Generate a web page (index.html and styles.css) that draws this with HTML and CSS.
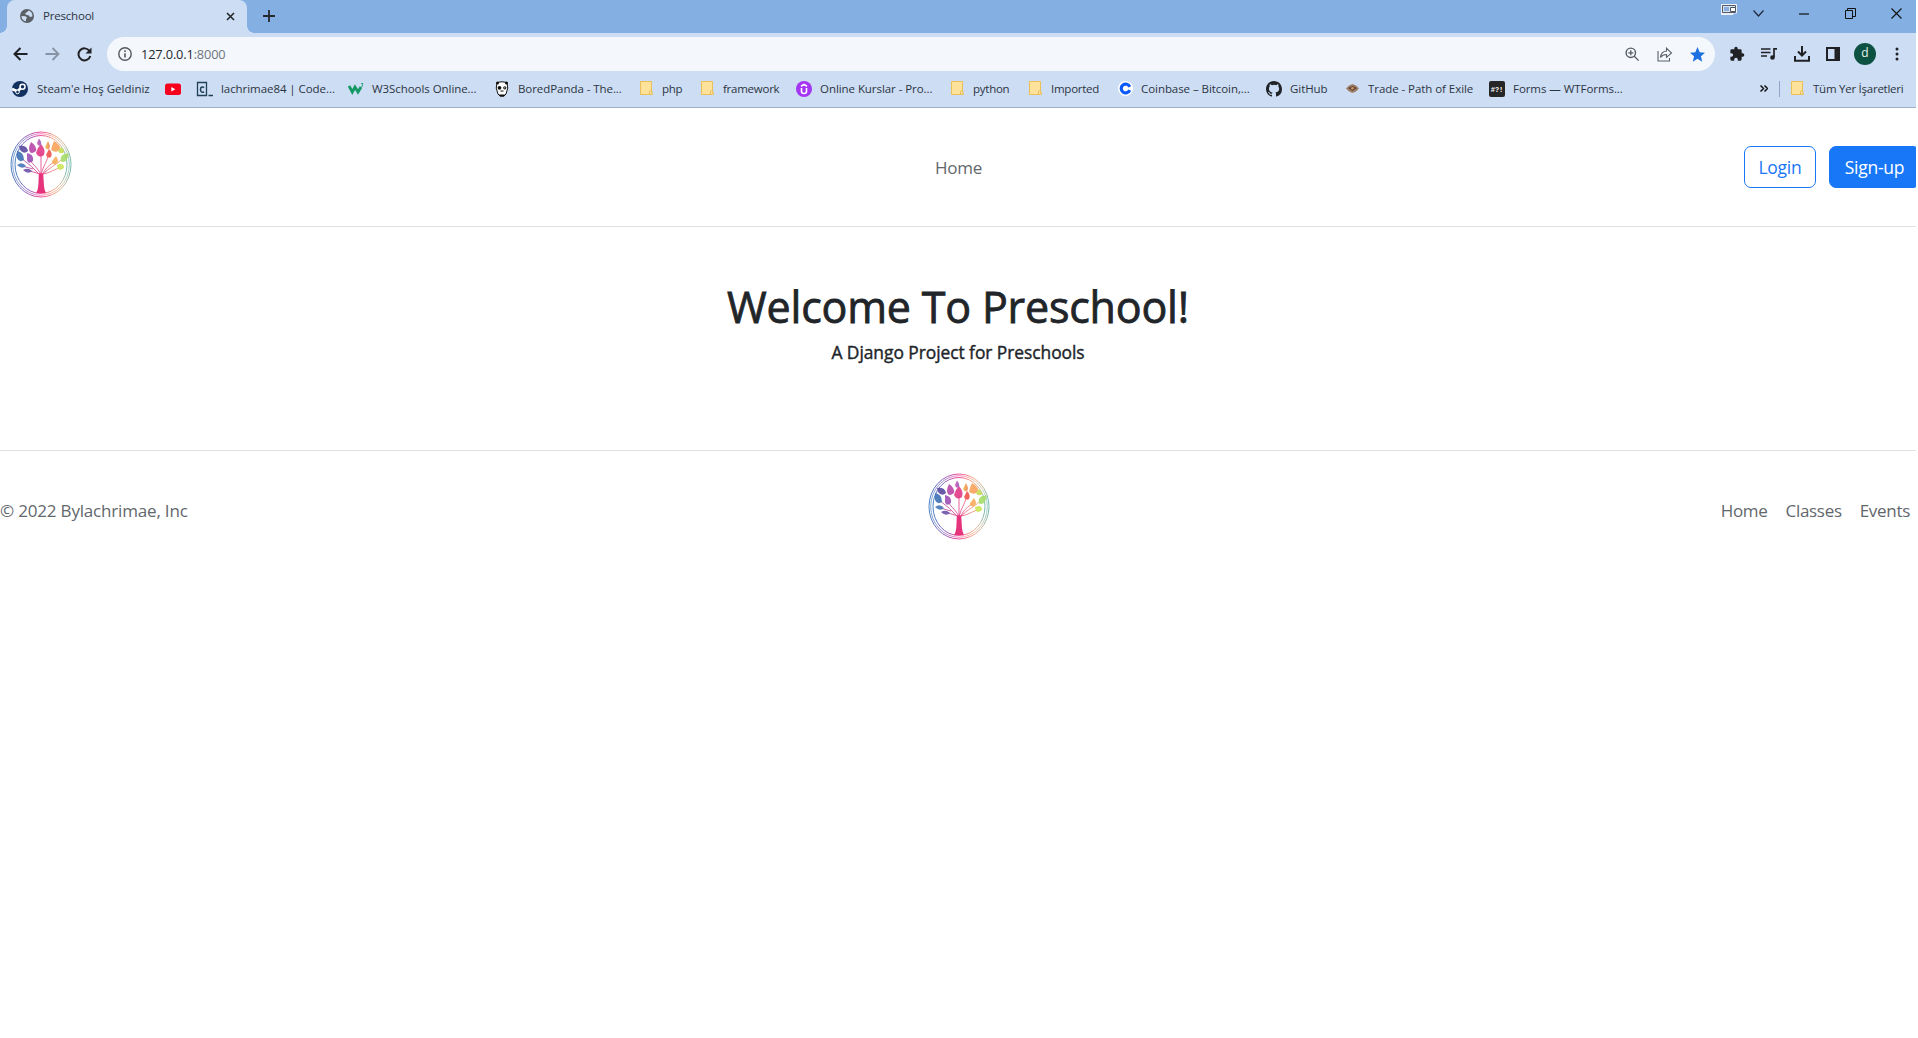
FILE: index.html
```html
<!DOCTYPE html>
<html lang="tr">
<head>
<meta charset="utf-8">
<title>Preschool</title>
<link rel="stylesheet" href="styles.css">
</head>
<body>
<svg class="defs" width="0" height="0">
  <defs>
    <linearGradient id="rainbow" x1="0" y1="0" x2="1" y2="0"><stop offset="0" stop-color="#4c83c3"/><stop offset=".22" stop-color="#8262bd"/><stop offset=".48" stop-color="#f04a9c"/><stop offset=".72" stop-color="#f6a283"/><stop offset=".88" stop-color="#ceb99c"/><stop offset="1" stop-color="#75b9ad"/></linearGradient>
    <linearGradient id="branch" gradientUnits="userSpaceOnUse" x1="8" y1="0" x2="54" y2="0"><stop offset="0" stop-color="#8851aa"/><stop offset=".5" stop-color="#e53482"/><stop offset="1" stop-color="#f2b45e"/></linearGradient>
    <linearGradient id="multi"><stop offset="0" stop-color="#d74fb0"/><stop offset=".5" stop-color="#6e63c6"/><stop offset=".6" stop-color="#efd24c"/><stop offset="1" stop-color="#ef7a51"/></linearGradient>
    <symbol id="tree" viewBox="0 0 62 67">
      <g fill="none" stroke="url(#rainbow)"><ellipse cx="31" cy="33.500" rx="30" ry="32.500" stroke-width="1"/><ellipse cx="31" cy="33.500" rx="28.300" ry="30.800" stroke-width=".7"/><ellipse cx="31" cy="33.500" rx="26" ry="29" stroke-width="1"/></g>
      <g fill="none" stroke="url(#branch)" stroke-width=".8"><path d="M31 44V22M31 44C28 37 24 35 20 29M30 44Q22 35 11 27M30 43L20 40M31 44C33 35 37 31 38 25M32 44C36 36 43 31 45 31M32 44C40 36 46 34 51 29M33 43C40 42 43 39 49 37M23 38L12 35"/></g>
      <path fill="#e5347b" d="M28.800 42.500H33.200L34 55Q34.500 60 36 62H26Q28.300 59 28.500 51Z"/>
      <g opacity=".9">
      <path fill="#3f72b5" d="M7 20Q14 21 14 29Q9 32 7 27Z"/><path fill="#4a78b9" d="M7 34Q12 30 16 35Q12 39 7 34Z"/><path fill="#594aa1" d="M9 15Q17 14 18 20Q14 24 10 19Z"/>
      <path fill="#6d51a8" d="M13 39Q18 36 22 40Q18 44 13 39Z"/><path fill="#9c50b5" d="M17 22Q24 23 23 30Q18 34 17 29Z"/><path fill="#b946a7" d="M21 11Q27 15 26 20Q20 25 19 18Q19 15 21 11Z"/>
      <path fill="#e23a87" d="M31 13Q36 19 34 24Q29 28 26 22Q27 17 31 13Z"/><path fill="url(#multi)" d="M29 7.500Q32 11 31 14Q28 16 27 12ZM38 10Q41 15 39 18Q36 19 35 16Z"/>
      <path fill="#f0524b" d="M39 18Q43 22 41 26Q38 28 36 24Z"/><path fill="#f9a359" d="M44 10Q51 14 50 18Q47 23 41 19Q42 14 44 10Z"/><path fill="#f8ad5c" d="M46 25Q50 31 46 33Q42 34 42 30Z"/>
      <path fill="#c6dc54" d="M51 16Q56 20 53 22Q49 23 48 20Z"/><path fill="#a7dc69" d="M59 22.500Q57 33 51 30.500Q49 22 59 22.500Z"/><path fill="#cde557" d="M47 34Q54 31 54 37Q48 42 47 34Z"/>
      </g>
    </symbol>
    <symbol id="folder" viewBox="0 0 13 15"><path d="M.5.5h11v10.500l.8 1v1.500H.5z" fill="#ffe29a" stroke="#e9bf5b"/><path d="M9.500 11q0-1.500 1.200-1.500t1.200 1.500v2.500H9.500z" fill="#ffe29a" stroke="#e9bf5b"/></symbol>
  </defs>
</svg>

<div class="browser">
  <div class="tabstrip">
    <div class="tab">
      <svg width="14" height="14" viewBox="0 0 14 14"><circle cx="7" cy="7" r="7" fill="#5a6066"/><path d="M8.500 1.500L7 3.300 5.300 4 5.500 5.500 9 6.500l1 1.500 2.300-.5Q13 3 8.500 1.500ZM1.500 7l4 .2 1.600 1.600L6 10v2.300Q1.500 11.500 1.500 7ZM8 12.300l2-2" fill="#cdddf4"/></svg>
      <span class="tab-title">Preschool</span>
      <svg class="tab-close" width="9" height="9" viewBox="0 0 9 9"><path d="M1 1l7 7M8 1L1 8" stroke="#25282c" stroke-width="1.600"/></svg>
    </div>
    <svg class="new-tab" width="12" height="12" viewBox="0 0 12 12"><path d="M6 0v12M0 6h12" stroke="#25282c" stroke-width="1.800"/></svg>
    <div class="window-controls">
      <svg width="16" height="12" viewBox="0 0 16 12"><path d="M.5.500h15v8.500H12v1.500H.5z" fill="#e8edf3" stroke="#eef2f7"/><path d="M1.500 1.500h13v7h-13z" fill="#d8e3f2" stroke="#535b68"/><path d="M3 3h5v4H3z" fill="#8caede"/><path d="M9.500 3.500h5v4h-5z" fill="#fff" stroke="#4e5561"/></svg>
      <svg width="11" height="7" viewBox="0 0 11 7"><path d="M.5.500l5 5.500 5-5.500" fill="none" stroke="#202938" stroke-width="1.200"/></svg>
      <svg width="10" height="2"><path d="M0 1h10" stroke="#111" stroke-width="1.200"/></svg>
      <svg width="11" height="11" viewBox="0 0 11 11"><path d="M.5 2.500h7v8h-7zM2.500 2V.5h8v8H8" fill="none" stroke="#111"/></svg>
      <svg width="11" height="11" viewBox="0 0 11 11"><path d="M.5.500l10 10M10.500.500l-10 10" stroke="#111" stroke-width="1.100"/></svg>
    </div>
  </div>

  <div class="toolbar">
    <div class="nav-buttons">
      <svg width="15" height="14" viewBox="0 0 15 14"><path d="M14.500 7H1.500M7.500 1L1.500 7l6 6" fill="none" stroke="#202124" stroke-width="2"/></svg>
      <svg width="15" height="14" viewBox="0 0 15 14"><path d="M.5 7h13M7.500 1l6 6-6 6" fill="none" stroke="#8793a5" stroke-width="1.800"/></svg>
      <svg width="15" height="15" viewBox="0 0 15 15"><path d="M12.500 4A6 6 0 1 0 13.300 9" fill="none" stroke="#202124" stroke-width="2"/><path d="M14.500.5v6h-6z" fill="#202124"/></svg>
    </div>
    <div class="omnibox">
      <svg width="14" height="14" viewBox="0 0 14 14"><circle cx="7" cy="7" r="6.200" fill="none" stroke="#55595e" stroke-width="1.400"/><path d="M7 6.200v4.300M7 3.300v1.700" stroke="#55595e" stroke-width="1.600"/></svg>
      <span class="url">127.0.0.1<span class="port">:8000</span></span>
      <div class="omnibox-actions">
        <svg width="15" height="15" viewBox="0 0 15 15"><circle cx="5.800" cy="5.800" r="4.700" fill="none" stroke="#555a60" stroke-width="1.400"/><path d="M9.300 9.300l4.300 4.300M3.300 5.800h5M5.800 3.300v5" stroke="#555a60" stroke-width="1.300"/></svg>
        <svg width="16" height="15" viewBox="0 0 16 15"><path d="M1 4v10h11.500v-3M3.500 10.500Q4 4.500 9.500 4V1.200L14.500 6 9.500 10.300V7.500Q5.500 7.500 3.500 10.500Z" fill="none" stroke="#5b6067" stroke-width="1.100"/></svg>
        <svg width="15" height="15" viewBox="0 0 24 24"><path fill="#1c70df" d="M12 0l3.500 8.500 8.500.7-6.500 5.600 2 8.700L12 18.800l-7.500 4.700 2-8.700L0 9.200l8.500-.7z"/></svg>
      </div>
    </div>
    <div class="tool-icons">
      <svg width="16" height="16" viewBox="0 0 24 24"><path fill="#202124" d="M20.500 11H19V7a2 2 0 0 0-2-2h-4V3.500a2.500 2.500 0 0 0-5 0V5H4a2 2 0 0 0-2 2v3.800h1.500a2.700 2.700 0 0 1 0 5.400H2V20a2 2 0 0 0 2 2h3.800v-1.500a2.700 2.700 0 0 1 5.400 0V22H17a2 2 0 0 0 2-2v-4h1.500a2.500 2.500 0 0 0 0-5z"/></svg>
      <svg width="17" height="14" viewBox="0 0 17 14"><path d="M0 2h9.500M0 5.500h9.500M0 9h6M13 10V1.800h3" fill="none" stroke="#202124" stroke-width="1.700"/><circle cx="11.500" cy="10.500" r="2.300" fill="#202124"/></svg>
      <svg width="16" height="16" viewBox="0 0 16 16"><path d="M8 0v9M4 5.500L8 9.500l4-4M1 10v4.700h14V10" fill="none" stroke="#202124" stroke-width="2"/></svg>
      <svg width="14" height="14" viewBox="0 0 14 14"><path d="M1 1h12v12H1z" fill="none" stroke="#202124" stroke-width="2"/><path d="M8.500 1H13v12H8.500z" fill="#202124"/></svg>
      <span class="avatar">d</span>
      <svg width="4" height="14" viewBox="0 0 4 14"><g fill="#202124"><circle cx="2" cy="2" r="1.500"/><circle cx="2" cy="7" r="1.500"/><circle cx="2" cy="12" r="1.500"/></g></svg>
    </div>
  </div>

  <div class="bookmarks">
    <div class="bookmark steam"><svg width="16" height="16" viewBox="0 0 16 16"><circle cx="8" cy="8" r="8" fill="#12305d"/><path d="M0 8l5.500 2.300L9.500 6.500" fill="none" stroke="#fff" stroke-width="2.600"/><circle cx="10.500" cy="5.800" r="2.500" fill="#12305d" stroke="#fff" stroke-width="1.500"/><circle cx="5.500" cy="11" r="1.800" fill="#12305d" stroke="#fff"/></svg><span>Steam'e Hoş Geldiniz</span></div>
    <div class="bookmark"><svg width="17" height="16" viewBox="0 0 17 16"><rect x="1" y="2.500" width="16" height="11.500" rx="2.500" fill="#f7001d"/><path d="M7.300 6v4.500l4-2.200z" fill="#fff"/></svg></div>
    <div class="bookmark"><svg width="17" height="16" viewBox="0 0 17 16"><path d="M1.500 1.500h9v13h-9zM12.500 14.500H17" fill="none" stroke="#204056" stroke-width="1.300"/><path d="M8.200 6.500Q4.500 5 4.500 8.500T8.200 11" fill="none" stroke="#204056" stroke-width="1.500"/></svg><span>lachrimae84 | Code...</span></div>
    <div class="bookmark w3"><svg width="16" height="16" viewBox="0 0 16 16"><path d="M1 5l3.300 6L7 6l3 5 3-5" fill="none" stroke="#149964" stroke-width="2.800"/><path d="M13 2.500h2L14 4q2.500.500-.8 1.800" fill="none" stroke="#149964" stroke-width=".8"/></svg><span>W3Schools Online...</span></div>
    <div class="bookmark panda"><svg width="16" height="16" viewBox="0 0 16 16"><path d="M3 1.500Q8 0 13 1.500Q15 7 12 13L10 15H6L4 13Q1 7 3 1.500z" fill="#fff" stroke="#111"/><circle cx="3.500" cy="2" r="1.500" fill="#111"/><circle cx="12.500" cy="2" r="1.500" fill="#111"/><circle cx="5.500" cy="6.800" r="1.900" fill="#111"/><circle cx="10.800" cy="6.800" r="1.600" fill="#111"/><circle cx="10.800" cy="6.800" r=".6" fill="#fff"/><path d="M6.500 9.500h3v1h-3zM5 13.500h6L10 15.500H6z" fill="#111"/></svg><span>BoredPanda - The...</span></div>
    <div class="bookmark folder"><svg width="13" height="15"><use href="#folder"/></svg><span>php</span></div>
    <div class="bookmark folder"><svg width="13" height="15"><use href="#folder"/></svg><span>framework</span></div>
    <div class="bookmark"><svg width="16" height="16" viewBox="0 0 16 16"><circle cx="8" cy="8" r="8" fill="#a435f0"/><path d="M5.500 7v3.500q0 2 2.500 2t2.500-2V7M5 5.200l3-1.700 3 1.700" fill="none" stroke="#fff" stroke-width="1.600"/></svg><span>Online Kurslar - Pro...</span></div>
    <div class="bookmark folder"><svg width="13" height="15"><use href="#folder"/></svg><span>python</span></div>
    <div class="bookmark folder"><svg width="13" height="15"><use href="#folder"/></svg><span>Imported</span></div>
    <div class="bookmark"><svg width="15" height="15" viewBox="0 0 16 16"><circle cx="8" cy="8" r="8" fill="#fff"/><path d="M12.500 6.300A4.700 4.700 0 1 0 12.500 9.700" fill="none" stroke="#0a59fa" stroke-width="3.400"/></svg><span>Coinbase – Bitcoin,...</span></div>
    <div class="bookmark"><svg width="16" height="16" viewBox="0 0 16 16"><path fill="#202429" d="M8 0C3.580 0 0 3.580 0 8c0 3.540 2.290 6.530 5.470 7.590.4.070.55-.17.55-.38 0-.19-.01-.82-.01-1.490-2.010.37-2.530-.49-2.690-.94-.09-.23-.48-.94-.82-1.130-.28-.15-.68-.52-.01-.53.63-.01 1.080.58 1.230.82.720 1.210 1.870.87 2.330.66.070-.52.280-.87.510-1.070-1.780-.2-3.640-.89-3.640-3.950 0-.87.310-1.590.82-2.150-.08-.2-.36-1.020.08-2.120 0 0 .67-.21 2.200.82a7.600 7.600 0 0 1 4 0c1.530-1.040 2.200-.82 2.200-.82.44 1.100.16 1.920.08 2.120.51.560.82 1.270.82 2.150 0 3.070-1.870 3.750-3.650 3.950.29.250.54.730.54 1.480 0 1.070-.01 1.930-.01 2.200 0 .21.150.46.550.38A8 8 0 0 0 16 8c0-4.420-3.580-8-8-8z"/></svg><span>GitHub</span></div>
    <div class="bookmark"><svg width="15" height="15" viewBox="0 0 15 15"><path d="M1 7.500l3-3L7.500 3 11 4.500l3 3-3 3L7.500 12 4 10.500z" fill="#a08069"/><path d="M3 7l4.500-2L12 7l-4.500 3z" fill="#5c463e"/><circle cx="7.500" cy="7.300" r="1.300" fill="#d99955"/></svg><span>Trade - Path of Exile</span></div>
    <div class="bookmark"><svg width="16" height="16" viewBox="0 0 16 16"><rect width="16" height="16" rx="2" fill="#262626"/><text x="8" y="11" text-anchor="middle" class="hash">#?!</text></svg><span>Forms — WTForms...</span></div>
    <svg class="more" width="8" height="7" viewBox="0 0 8 7"><path d="M.5.500l3 3-3 3M4.500.500l3 3-3 3" fill="none" stroke="#111" stroke-width="1.500"/></svg>
    <div class="bookmark folder all"><svg width="13" height="15"><use href="#folder"/></svg><span>Tüm Yer İşaretleri</span></div>
  </div>
</div>

<div class="page">
  <header class="site-header">
    <svg class="logo" width="62" height="67"><use href="#tree"/></svg>
    <nav><a>Home</a></nav>
    <div class="auth"><button class="btn outline">Login</button><button class="btn solid">Sign-up</button></div>
  </header>
  <main>
    <h1>Welcome To Preschool!</h1>
    <h6>A Django Project for Preschools</h6>
  </main>
  <footer>
    <p>© 2022 Bylachrimae, Inc</p>
    <svg class="logo" width="62" height="67"><use href="#tree"/></svg>
    <nav class="links"><a>Home</a><a>Classes</a><a>Events</a></nav>
  </footer>
</div>
</body>
</html>
```
FILE: styles.css
```css
* { box-sizing: border-box; }
body {
  margin: 0;
  overflow: hidden;
  background: #fff;
  color: #212529;
  font-family: "Open Sans", "Noto Sans", sans-serif;
  font-size: 17px;
}
svg { display: block; flex: none; }
.defs { position: absolute; }

.browser { width: 1916px; height: 108px; background: #cdddf4; border-bottom: 1px solid #9eafcb; font-size: 11.5px; color: #2c3542; }
.tabstrip { display: flex; height: 33px; background: #83afe3; padding-left: 7px; }
.tab { position: relative; display: flex; align-items: center; width: 240px; padding: 0 12px 1px 13px; background: #cdddf4; border-radius: 8px 8px 0 0; }
.tab::before, .tab::after { content: ""; position: absolute; bottom: 0; width: 7px; height: 7px; }
.tab::before { left: -7px; background: radial-gradient(circle at 0 0, #83afe3 6.5px, #cdddf4 7px); }
.tab::after { right: -7px; background: radial-gradient(circle at 100% 0, #83afe3 6.5px, #cdddf4 7px); }
.tab-title { margin: -1px 0 0 9px; letter-spacing: -.2px; }
.tab-close { margin-left: auto; }
.new-tab { margin: 10px 0 0 16px; }
.window-controls { display: grid; grid-template-columns: 32px 46px 46px 46px 11px; align-items: center; height: 27px; margin-left: auto; margin-right: 14px; }
.window-controls svg:first-child { margin-top: -7px; }

.toolbar { display: flex; align-items: center; height: 38px; padding: 4px 13px 0; }
.nav-buttons { display: flex; align-items: center; gap: 17px; width: 94px; }
.omnibox { display: flex; align-items: center; width: 1608px; height: 34px; padding: 0 10px 0 11px; border-radius: 17px; background: #f4f8fd; font-size: 13px; color: #24282d; }
.url { margin: -1px 0 0 9px; letter-spacing: -.15px; }
.url { font-size: 12.8px; }
.port { color: #70757b; }
.omnibox-actions { display: flex; align-items: center; gap: 17px; margin-left: auto; }
.tool-icons { display: flex; align-items: center; gap: 16px; margin-left: 14px; }
.avatar { width: 22px; height: 22px; margin-left: -2px; border-radius: 50%; background: #0d5142; color: #e9f3ef; text-align: center; line-height: 20px; font-size: 12px; }
.tool-icons svg:last-child { margin-left: 3px; }

.bookmarks { display: grid; grid-template-columns: 152px 32px 152px 146px 146px 61px 95px 155px 78px 89px 148px 79px 144px 271px 19px 125px; align-items: center; height: 35px; padding-left: 12px; white-space: nowrap; }
.bookmark { display: flex; align-items: center; gap: 8px; letter-spacing: -.06px; }
.steam { gap: 9px; letter-spacing: 0; }
.folder { gap: 9px; letter-spacing: -.25px; }
.all { height: 16px; padding-left: 11px; border-left: 1px solid #94a6c5; }
.hash { font: bold 7px "Liberation Mono", monospace; fill: #fff; letter-spacing: 0; }

.page { width: 1916px; overflow: hidden; }
.site-header { display: grid; grid-template-columns: 10px 1fr auto 1fr; align-items: center; height: 119px; border-bottom: 1px solid #dee2e6; }
.site-header .logo { grid-column: 2; margin-top: -6px; }
.site-header nav, footer { color: #62676c; }
a { letter-spacing: -.3px; }
.site-header nav { margin-left: -9px; }
.auth { display: flex; justify-content: flex-end; gap: 13px; margin-right: -4px; }
.btn { height: 42px; padding: 0; border: 1px solid #1877f7; border-radius: 7px; font: 17.5px "Open Sans", sans-serif; letter-spacing: -.25px; }
.outline { width: 72px; background: #fff; color: #1877f7; }
.solid { width: 91px; background: #1877f7; color: #fff; }

main { height: 223px; padding-top: 53px; text-align: center; }
h1 { margin: 0; font-size: 43px; line-height: 53px; font-weight: 400; letter-spacing: -.2px; -webkit-text-stroke: .8px #212529; }
h6 { margin: 9px 0 0; font-size: 17.4px; line-height: 21px; font-weight: 400; letter-spacing: -.05px; -webkit-text-stroke: .4px #212529; }

footer { display: grid; grid-template-columns: 1fr auto 1fr; align-items: center; height: 120px; border-top: 1px solid #dee2e6; }
footer .logo { margin: -8px 0 0 2px; }
footer p { margin: 0; letter-spacing: -.18px; }
.links { display: flex; justify-content: flex-end; gap: 18px; padding-right: 6px; }
```
